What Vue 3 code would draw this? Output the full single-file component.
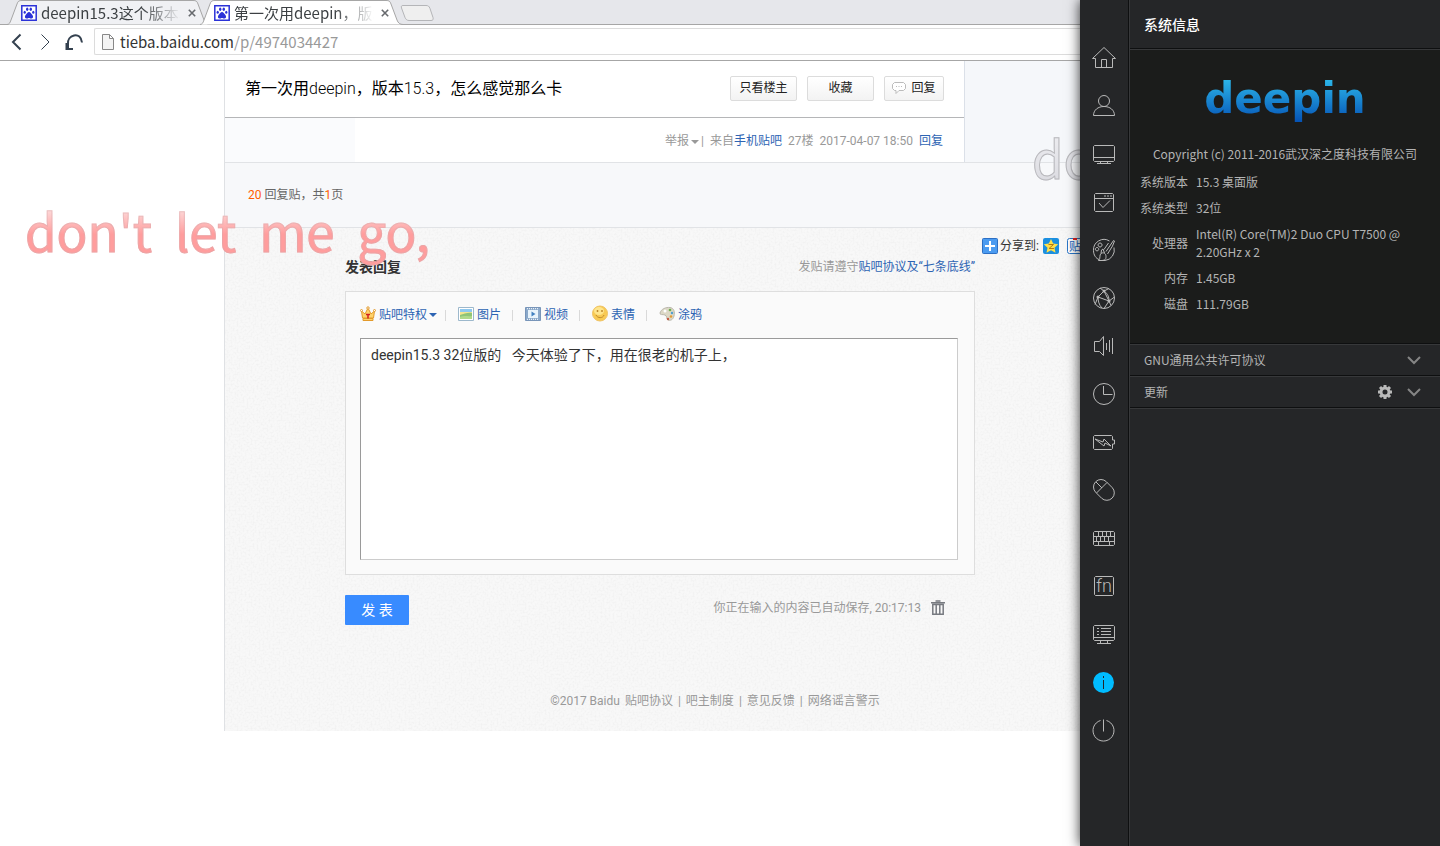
<script setup>
import { ref } from 'vue'

const url = ref('tieba.baidu.com/p/4974034427')
const draft = ref('deepin15.3 32位版的\u00a0\u00a0 今天体验了下，用在很老的机子上，')
const lyric = "don't let me go,".replaceAll(' ', '\u00a0\u00a0')

const tabs = [
  { title: 'deepin15.3这个版本真的', active: false },
  { title: '第一次用deepin，版本15.3', active: true },
]

const tools = [
  { id: 'crown', label: '贴吧特权' },
  { id: 'image', label: '图片' },
  { id: 'video', label: '视频' },
  { id: 'smile', label: '表情' },
  { id: 'paint', label: '涂鸦' },
]

const footerLinks = ['贴吧协议', '吧主制度', '意见反馈', '网络谣言警示']

const specs = [
  ['系统版本', '15.3 桌面版'],
  ['系统类型', '32位'],
  ['处理器', 'Intel(R) Core(TM)2 Duo CPU T7500 @ 2.20GHz x 2'],
  ['内存', '1.45GB'],
  ['磁盘', '111.79GB'],
]

const modules = [
  { name: '主页', d: 'M.5 12.5 12 1.5l11.5 11H20.500v9h-17v-9zM9.500 21.500v-8h5v8' },
  { name: '帐户', d: 'M12 1.500a5.500 5.500 0 1 1 0 11a5.500 5.500 0 1 1 0-11zM1.500 21.500C1.500 16 6 12.500 12 12.500S22.500 16 22.500 21.500z' },
  { name: '显示', d: 'M2.500 3.500h19l1 1v14l-1 1h-19l-1-1v-14zM1.500 15.500h21M8.500 19.500v2M15.500 19.500v2M5 21.500h14' },
  { name: '默认程序', d: 'M3.500 3.500h17l1 1v16l-1 1h-17l-1-1v-16zM2.500 8.500h19M12 6h2M15 6h2M18 6h2M7 13l4 4.500 7-7' },
  { name: '个性化', d: 'M17.500 3A10.500 10.500 0 0 0 1.500 12.500C1.500 17 4 20.500 7 21.500M22 9.500A10.500 10.500 0 0 1 13 22.500H6.500C9 20.500 7 17 9 15.500S14 15 14 18.500 12.500 22 10 22.500M9 15.500 9.500 12 11 11 12.500 15M14 13.500 21.500 2.500 22.500 3 20.500 8 15.500 16M12 11.500 16.500 5M8 5a2 2 0 1 0 .1 0zM5 9.500a1.700 1.700 0 1 0 .1 0z' },
  { name: '网络', d: 'M12 1.500a10.500 10.500 0 1 1 0 21a10.500 10.500 0 1 1 0-21zM12 5 6 11l11 4zM12 5c4 3 5 6 5 10l-5 7.500M6 11 3 18.500M6 11c0 4 1 8 4 11M12 5 8 2M12 5l5-2.500M17 15l5.500-4M17 15l2 4.500', dots: [[12, 5], [6, 11], [17, 15]] },
  { name: '声音', d: 'M2.500 7.500h5l4-5v19l-4-4h-5zM14.500 9v7M17.500 6v12M20.500 4v16' },
  { name: '时间', d: 'M12 1.500a10.500 10.500 0 1 1 0 21a10.500 10.500 0 1 1 0-21zM11.500 4v8.500h9' },
  { name: '电源', d: 'M2.500 5.500h17l1 1V10h2v4h-2v4.500l-1 1h-17l-1-1v-12zM3 9l9 7 1-3 6 3-7-7-1 3z' },
  { name: '鼠标', d: 'M3.700 3.700a7.500 7.500 0 0 1 10.600 0l6 6a7.500 7.500 0 0 1-10.600 10.600l-6-6a7.500 7.500 0 0 1 0-10.600M4.500 15 15 4.500M4 4l6 6' },
  { name: '键盘', d: 'M2.500 5.500h19l1 1v12l-1 1h-19l-1-1v-12zM1.500 10.500h21M1.500 15.500h21M6.500 5.500v5M10.500 5.500v5M14.500 5.500v5M18.500 5.500v5M4.500 10.500v5M8.500 10.500v5M12.500 10.500v5M16.500 10.500v5M6.500 15.500v4M17.500 15.500v4' },
  { name: '快捷键', d: 'M3.500 2.500h17l1 1v17l-1 1h-17l-1-1v-17z', text: 'fn' },
  { name: '启动菜单', d: 'M2.500 3.500h19l1 1v13l-1 1h-19l-1-1v-13zM1.500 15.500h21M8.500 18.500v3M15.500 18.500v3M5 21.500h14M5 6.500h2M9 6.500h10M5 9.500h2M9 9.500h10M5 12.500h2M9 12.500h10' },
  { name: '系统信息', info: true },
  { name: '关机', d: 'M8.500 2.500a10.500 10.500 0 1 0 6 0M11.500 1.500v12' },
]
</script>

<template>
  <div class="desktop">
    <main class="browser">
      <div class="tabstrip" role="tablist">
        <div v-for="t in tabs" :key="t.title" class="tab" :class="{ active: t.active }" role="tab" :aria-selected="t.active">
          <svg class="tab-shape" viewBox="0 0 203 25" aria-hidden="true">
            <path d="M0 24.500C2 24.500 3 23 4 20L10 4C11 1 12 .5 15 .5H186C189 .5 190 1 191 4L197 20C198 23 200 24.500 203 24.500" />
          </svg>
          <svg class="favicon" viewBox="0 0 16 16" aria-hidden="true">
            <path fill="#fff" stroke="#2b32d8" stroke-width="1.500" d="M.8.8h14.400v14.400H.8z" />
            <g fill="#2b32d8"><ellipse cx="6.200" cy="4.300" rx="1.200" ry="1.700" /><ellipse cx="9.800" cy="4.300" rx="1.200" ry="1.700" /><ellipse cx="3.700" cy="7.200" rx="1.100" ry="1.500" /><ellipse cx="12.300" cy="7.200" rx="1.100" ry="1.500" /><path d="M8 7c1.500 0 2 1.500 3.200 2.800s1.300 3.700-.7 3.700-1.500-.5-2.500-.5-.5.500-2.500.5-1.900-2.400-.7-3.700S6.500 7 8 7" /></g>
          </svg>
          <span class="tab-title">{{ t.title }}</span>
          <button class="tab-close" aria-label="关闭标签页"><svg viewBox="0 0 10 10"><path d="m1 1 8 8M9 1 1 9" /></svg></button>
        </div>
        <button class="newtab" aria-label="新标签页">
          <svg viewBox="0 0 34 16"><path d="M3 .5h23c2 0 3 .5 4 3l3 9c.5 2 0 3-2 3H9c-2 0-3-1-4-3L1.500 3C1 1 1.500.5 3 .5z" /></svg>
        </button>
      </div>

      <div class="toolbar">
        <button aria-label="后退"><svg viewBox="0 0 18 18"><path d="M13.500 1.500 6 9l7.500 7.500" /></svg></button>
        <button aria-label="前进" class="forward"><svg viewBox="0 0 18 18"><path d="M5.500 1.500 13 9l-7.500 7.500" /></svg></button>
        <button aria-label="刷新"><svg viewBox="0 0 18 18"><path d="M17 9.500C16.500 4 13 1.500 9 2.500 5 3.500 2.500 7 3 11v4M1.500 10v6H8" /></svg></button>
        <div class="omnibox">
          <svg viewBox="0 0 12 16" aria-hidden="true"><path fill="#f4f4f4" stroke="#888" d="M.5.5h7l4 4v11H.5zM7.500.5v4h4" /></svg>
          <div class="address" role="textbox" aria-label="地址">{{ url.slice(0, 15) }}<span>{{ url.slice(15) }}</span></div>
        </div>
      </div>

      <div class="page">
        <div class="thread">
          <section class="post">
            <header class="thread-head">
              <h1>第一次用<span>deepin</span>，版本<span>15.3</span>，怎么感觉那么卡</h1>
              <button class="pill">只看楼主</button>
              <button class="pill">收藏</button>
              <button class="pill small">
                <svg viewBox="0 0 14 12" aria-hidden="true"><path fill="#fff" stroke="#bbb" d="M2.500.5h9l2 2v4l-2 2H7l-3 3v-3H2.500l-2-2v-4z" /><path stroke="#bbb" d="M4 4.500h1M6.500 4.500h1M9 4.500h1" /></svg>
                回复
              </button>
            </header>
            <div class="floor">
              <div class="author"></div>
              <div class="meta">
                <span>举报<i class="caret"></i></span><span class="bar">|</span>
                <span class="from">来自<a href="#">手机贴吧</a></span>
                <span>27楼</span>
                <span>2017-04-07 18:50</span>
                <a href="#">回复</a>
              </div>
            </div>
          </section>
        </div>
        <div class="pager"><em>20</em> 回复贴，共<em>1</em>页</div>

        <div class="lower">
          <svg class="grain" aria-hidden="true">
            <filter id="paper"><feTurbulence type="fractalNoise" baseFrequency="0.5" numOctaves="2" seed="4" /><feColorMatrix values="0 0 0 0 0.45  0 0 0 0 0.45  0 0 0 0 0.45  0.5 0 0 0 -0.19" /></filter>
            <rect width="100%" height="100%" filter="url(#paper)" />
          </svg>
          <div class="reply-row">
            <form class="reply" @submit.prevent>
              <div class="reply-head">
                <label for="editor">发表回复</label>
                <span>发贴请遵守<a href="#">贴吧协议及“七条底线”</a></span>
              </div>
              <div class="editor">
                <div class="tools">
                  <template v-for="(t, i) in tools" :key="t.id">
                    <i v-if="i" class="sep"></i>
                    <button type="button" class="tool">
                      <svg viewBox="0 0 16 16" aria-hidden="true">
                        <g v-if="t.id === 'crown'"><path fill="#ffd36a" stroke="#e39a2b" d="M2.500 12 1.500 5 5 8l3-6 3 6 3.500-3-1 7zM3 12.500h10v2H3z" /><g fill="#fff" stroke="#e39a2b"><circle cx="1.500" cy="4.500" r="1" /><circle cx="8" cy="2" r="1.200" /><circle cx="14.500" cy="4.500" r="1" /></g><path stroke="#d21e1e" stroke-width="1.500" d="M6 8.500h4M8 8.500v4" /></g>
                        <g v-else-if="t.id === 'image'"><path fill="#fff" stroke="#9db8cc" d="M.5 1.500h15v13H.5z" /><path fill="#8fc8ef" d="M2 3h12v5H2z" /><path fill="#f3e58f" d="M2 6h12v3H2z" /><path fill="#8fc477" d="M2 9c4-1 8-3 12-2v6H2z" /><path fill="#b0d98a" d="M2 11c4-2 8 0 12-1v3H2z" /></g>
                        <g v-else-if="t.id === 'video'"><path fill="#8ba9ca" stroke="#7895b9" d="M.5 1.500h15v13H.5z" /><path fill="#e9f4fc" d="M3 4h10v8H3z" /><path stroke="#fff" stroke-dasharray="1 1" d="M2 2.700h12M2 13.300h12" /><path fill="#4381c0" d="m6.500 5.500 4 2.500-4 2.500z" /></g>
                        <g v-else-if="t.id === 'smile'"><circle cx="8" cy="7.500" r="7.500" fill="#f8ca54" stroke="#efc365" /><ellipse cx="7" cy="5" rx="5" ry="4" fill="#fee58d" /><path stroke="#c08a2d" stroke-width="1.500" d="M5.500 4v2M10 4v2" /><path fill="none" stroke="#c08a2d" d="M4 9c1.500 3.500 7 3.500 8 0" /></g>
                        <g v-else><path fill="#dcd8c6" stroke="#bab7ac" d="M1 7C2 3 7 1 11 1.500S16 6 15 10s-4 5-6 4-.5-4-3-5-5 .5-5-2z" /><circle cx="6" cy="5" r="1.500" fill="#fff" /><circle cx="11" cy="4" r="1.300" fill="#6eae50" /><circle cx="13" cy="7" r="1.200" fill="#4f9fd0" /><circle cx="12" cy="10.500" r="1.300" fill="#e29b36" /><circle cx="9" cy="13" r="1.200" fill="#c55b43" /></g>
                      </svg>
                      {{ t.label }}<i v-if="!i" class="caret blue"></i>
                    </button>
                  </template>
                </div>
                <textarea id="editor" v-model="draft" spellcheck="false"></textarea>
              </div>
              <div class="actions">
                <button class="submit" type="submit">发 表</button>
                <span class="saved">你正在输入的内容已自动保存, 20:17:13</span>
                <button type="button" class="trash" aria-label="清空">
                  <svg viewBox="0 0 14 15"><path fill="none" stroke="#777a80" stroke-width="1.500" d="M0 2.800h14M4.500 1h5M1.800 4.500v9.700h10.400V4.500zM5.200 5v9M8.800 5v9" /></svg>
                </button>
              </div>
            </form>
            <div class="share">
              <svg viewBox="0 0 16 16" aria-hidden="true"><rect x=".5" y=".5" width="15" height="15" rx="1" fill="#4b9bf0" stroke="#2c6fc4" /><path stroke="#fff" stroke-width="2" d="M8 3v10M3 8h10" /></svg>
              <span>分享到:</span>
              <svg class="zone" viewBox="0 0 16 16" aria-hidden="true"><rect width="16" height="16" rx="2" fill="#1b8fe0" /><path fill="#ffe04a" d="m8 1 2.200 4.600 5 .6-3.700 3.500 1 5L8 12.200l-4.500 2.500 1-5L.8 6.200l5-.6z" /><path fill="none" stroke="#b57a10" d="M5.500 6.500h5l-4.500 4h5" /></svg>
              <svg viewBox="0 0 16 16" aria-hidden="true"><rect x=".5" y=".5" width="15" height="15" rx="2" fill="#fff" stroke="#2a76c8" /><text x="2" y="12.500" font-size="12" fill="#1d66bd">贴</text><path stroke="#e02020" stroke-width="2" d="M6 1h4" /></svg>
            </div>
          </div>
          <footer>
            <span>©2017 Baidu</span>
            <template v-for="(l, i) in footerLinks" :key="l"><span v-if="i">|</span><a href="#">{{ l }}</a></template>
          </footer>
        </div>
      </div>

      <div class="lyric sung">{{ lyric }}</div>
      <div class="lyric next">don't</div>
    </main>

    <aside class="panel">
      <nav>
        <button v-for="m in modules" :key="m.name" :aria-label="m.name">
          <svg viewBox="0 0 24 24">
            <template v-if="m.info"><circle cx="11.500" cy="12.500" r="10.500" class="disc" /><path class="mark" d="M11.500 6v2M11.500 10v9" /></template>
            <path v-else :d="m.d" />
            <circle v-for="(p, i) in m.dots" :key="i" :cx="p[0]" :cy="p[1]" r="1.500" class="dot" />
            <text v-if="m.text" x="12" y="18" text-anchor="middle">{{ m.text }}</text>
          </svg>
        </button>
      </nav>
      <div class="detail">
        <h2>系统信息</h2>
        <section class="about">
          <div class="logo">deepin</div>
          <p>Copyright (c) 2011-2016武汉深之度科技有限公司</p>
          <table>
            <tbody>
              <tr v-for="s in specs" :key="s[0]"><th scope="row">{{ s[0] }}</th><td>{{ s[1] }}</td></tr>
            </tbody>
          </table>
        </section>
        <div class="fold">
          <span>GNU通用公共许可协议</span>
          <button aria-label="展开许可协议"><svg viewBox="0 0 14 14"><path d="m1 4 6 6 6-6" /></svg></button>
        </div>
        <div class="fold">
          <span>更新</span>
          <button aria-label="更新设置"><svg viewBox="0 0 14 14"><circle cx="7" cy="7" r="4" stroke-width="3" class="gear" /><path class="gear" stroke-width="3" d="M7 0v2M7 12v2M0 7h2M12 7h2M2 2l1.500 1.500M10.500 10.500 12 12M12 2l-1.500 1.500M3.500 10.500 2 12" /></svg></button>
          <button aria-label="展开更新"><svg viewBox="0 0 14 14"><path d="m1 4 6 6 6-6" /></svg></button>
        </div>
      </div>
    </aside>
  </div>
</template>

<style>
body { background: #fff; }
#app { min-height: 100vh; }
</style>

<style scoped>
* { box-sizing: border-box; }
button { font: inherit; color: inherit; background: none; border: 0; padding: 0; cursor: pointer; }
svg { display: block; fill: none; overflow: visible; flex: none; }
a { color: #2d64b3; text-decoration: none; }
.desktop { display: grid; grid-template-columns: minmax(0, 1fr) 360px; min-height: 100vh; font-family: "Noto Sans CJK SC", sans-serif; }

/* Browser window */
.browser { position: relative; overflow: hidden; background: #fff; }
.tabstrip { display: flex; height: 25px; padding-left: 7px; background: #e6e7eb; border-bottom: 1px solid #a6a6a6; }
.tab { position: relative; display: flex; align-items: center; width: 193px; height: 25px; padding: 1px 2px 0 14px; color: #3c4043; }
.tab.active { z-index: 1; }
.tab-shape { position: absolute; left: 0; top: 0; width: 203px; height: 25px; fill: #f0f1f4; stroke: #a6a6a6; }
.active .tab-shape { fill: #fff; }
.favicon { position: relative; width: 16px; height: 16px; margin-right: 4px; }
.tab-title { position: relative; flex: 1; overflow: hidden; white-space: nowrap; font-size: 15px; line-height: 22px; mask-image: linear-gradient(90deg, #000 72%, transparent 100%); }
.tab-close { position: relative; margin-left: 5px; padding: 2px; }
.tab-close svg { width: 8px; height: 8px; stroke: #66696d; stroke-width: 2; }
.newtab { margin-left: 7px; align-self: flex-start; padding-top: 5px; z-index: 1; }
.newtab svg { width: 34px; height: 16px; fill: #efefef; stroke: #b4b5b8; }
.toolbar { display: flex; align-items: center; gap: 11px; height: 36px; padding: 0 0 2px 7px; border-bottom: 1px solid #a6a6a6; }
.toolbar button svg { width: 18px; height: 18px; stroke: #34414f; stroke-width: 2; }
.toolbar .forward svg { stroke-width: 1; }
.omnibox { display: flex; align-items: center; gap: 6px; flex: 1; height: 27px; padding-left: 7px; border: 1px solid #dcdcdc; border-right: 0; border-radius: 2px 0 0 2px; }
.omnibox svg { width: 12px; height: 16px; }
.address { font-size: 15px; line-height: 24px; color: #333; }
.address span { color: #999; }

/* Forum page */
.page { margin-left: 224px; border-left: 1px solid #dfe1e4; font: 12px/18px Roboto, "Noto Sans CJK SC", sans-serif; color: #999; }
.thread { background: #f5f7fa; }
.post { width: 740px; background: #fff; border-right: 1px solid #dbe0e8; }
.thread-head { display: flex; align-items: center; gap: 10px; height: 57px; padding: 0 20px 2px; border-bottom: 1px solid #b5b6b8; }
h1 { flex: 1; margin: 0; padding-top: 2px; font-size: 16px; line-height: 24px; font-weight: 400; color: #000; }
h1 span { font-weight: 300; }
.pill { display: flex; align-items: center; justify-content: center; gap: 5px; width: 67px; height: 25px; border: 1px solid #dcdcdc; border-radius: 2px; background: linear-gradient(#fff, #f3f3f3); color: #222; }
.pill.small { width: 60px; }
.pill svg { width: 14px; height: 12px; }
.floor { display: flex; height: 44px; }
.author { width: 130px; background: #fafbfd; }
.meta { display: flex; flex: 1; align-items: center; justify-content: flex-end; gap: 6px; padding: 2px 21px 0 0; }
.bar { margin-left: -4px; }
.caret { display: inline-block; margin-left: 2px; border: 4px solid transparent; border-top-color: currentColor; border-bottom: 0; vertical-align: middle; }
.pager { height: 66px; padding: 23px; border: solid #e1e3e6; border-width: 1px 0; background: #f7f8fa; color: #666; }
.pager em { color: #ff5e00; font-style: normal; }
.lower { position: relative; overflow: hidden; background: #f8f8f8; }
.grain { position: absolute; inset: 0; width: 100%; height: 100%; opacity: .45; }
.reply-row { position: relative; display: flex; width: 980px; padding-left: 120px; }
.reply { width: 630px; padding-top: 27px; flex: none; }
.reply-head { display: flex; justify-content: space-between; line-height: 24px; margin-bottom: 12px; }
.reply-head label { font-size: 14px; font-weight: 700; color: #333; }
.editor { padding: 0 16px 14px 14px; border: 1px solid #dedede; background: #fafafa; }
.tools { display: flex; align-items: center; height: 46px; }
.tool { display: flex; align-items: center; gap: 3px; color: #2d64b3; }
.tool svg { width: 16px; height: 16px; margin-bottom: 2px; }
.sep { width: 1px; height: 11px; margin: 0 12px 0 11px; background: #d9d9d9; }
.caret.blue { margin: 0 -3px 0 -1px; }
textarea { display: block; width: 100%; height: 222px; padding: 4px 10px; resize: none; border: 1px solid #ccc; border-top-color: #9a9a9a; border-left-color: #9a9a9a; border-radius: 0; background: #fff; color: #333; font: 14px/24px Roboto, "Noto Sans CJK SC", sans-serif; outline: 0; }
.actions { display: flex; align-items: flex-start; margin-top: 20px; padding-right: 30px; }
.submit { width: 64px; height: 30px; margin-right: auto; border-radius: 1px; background: #388bff; color: #fff; font-size: 14px; }
.saved { line-height: 26px; margin-right: 10px; }
.trash { padding-top: 5px; }
.trash svg { width: 14px; height: 15px; }
.share { display: flex; align-items: center; height: 16px; margin: 10px 0 0 7px; color: #333; gap: 2px; white-space: nowrap; }
.share svg { width: 16px; height: 16px; }
.share .zone { margin: 0 6px 0 2px; }
footer { position: relative; display: flex; justify-content: center; gap: 5px; width: 980px; padding: 67px 0 21px; }
footer a { color: inherit; }

/* Floating lyric captions */
.lyric { position: absolute; white-space: pre; font-size: 51px; line-height: 72px; color: transparent; background-clip: text; -webkit-text-stroke: 1px #b8b8bc; pointer-events: none; }
.sung { left: 25px; top: 194px; background-image: linear-gradient(#fde0e0 18%, #ff9d9d 56%); -webkit-text-stroke: 1px #d9a9ab80; }
.next { left: 1032px; top: 121px; background-image: linear-gradient(#f1f1f4, #d8d8de); }

/* Control center */
.panel { display: grid; grid-template-columns: 49px minmax(0, 1fr); z-index: 2; background: #252628; color: #b4b4b4; font-size: 12px; line-height: 18px; box-shadow: 0 0 12px #000c; }
nav { display: flex; flex-direction: column; padding-top: 34px; border-right: 1px solid #0e0f10; }
nav button { display: grid; place-items: center; height: 48px; }
nav svg { width: 24px; height: 24px; stroke: #b9b9b9; stroke-width: 1; }
nav .disc { fill: #00bcff; stroke: none; }
nav .mark { stroke: #252628; }
nav .dot { fill: #b9b9b9; stroke: none; }
nav text { fill: #b9b9b9; stroke: none; font: 300 18px Roboto, sans-serif; }
.detail { border-left: 1px solid #37383a; }
h2 { margin: 0; padding: 12px 14px; font-size: 14px; line-height: 24px; font-weight: 500; color: #fff; border-bottom: 1px solid #0e0f10; }
.about { padding: 20px 0 26px; border-top: 1px solid #37383a; border-bottom: 1px solid #0e0f10; background: #1b1c1b; }
.logo { width: max-content; margin: 0 auto; font: 700 42px/58px "DejaVu Sans", sans-serif; color: transparent; background: linear-gradient(#2bb4e8 18%, #0552b5 90%); background-clip: text; }
.about p { margin: 17px 0 6px; text-align: center; }
table { border-collapse: collapse; width: 100%; }
th, td { padding: 4px 8px 4px 0; font-weight: 400; }
th { width: 66px; text-align: right; }
td { padding-right: 24px; }
.fold { display: flex; align-items: center; gap: 15px; height: 32px; padding: 0 19px 0 14px; border-top: 1px solid #37383a; border-bottom: 1px solid #0e0f10; }
.fold:last-child { box-shadow: 0 1px #37383a; }
.fold span { flex: 1; }
.fold svg { width: 14px; height: 14px; stroke: #858585; stroke-width: 2; }
.fold .gear { stroke: #b9b9b9; }
</style>
